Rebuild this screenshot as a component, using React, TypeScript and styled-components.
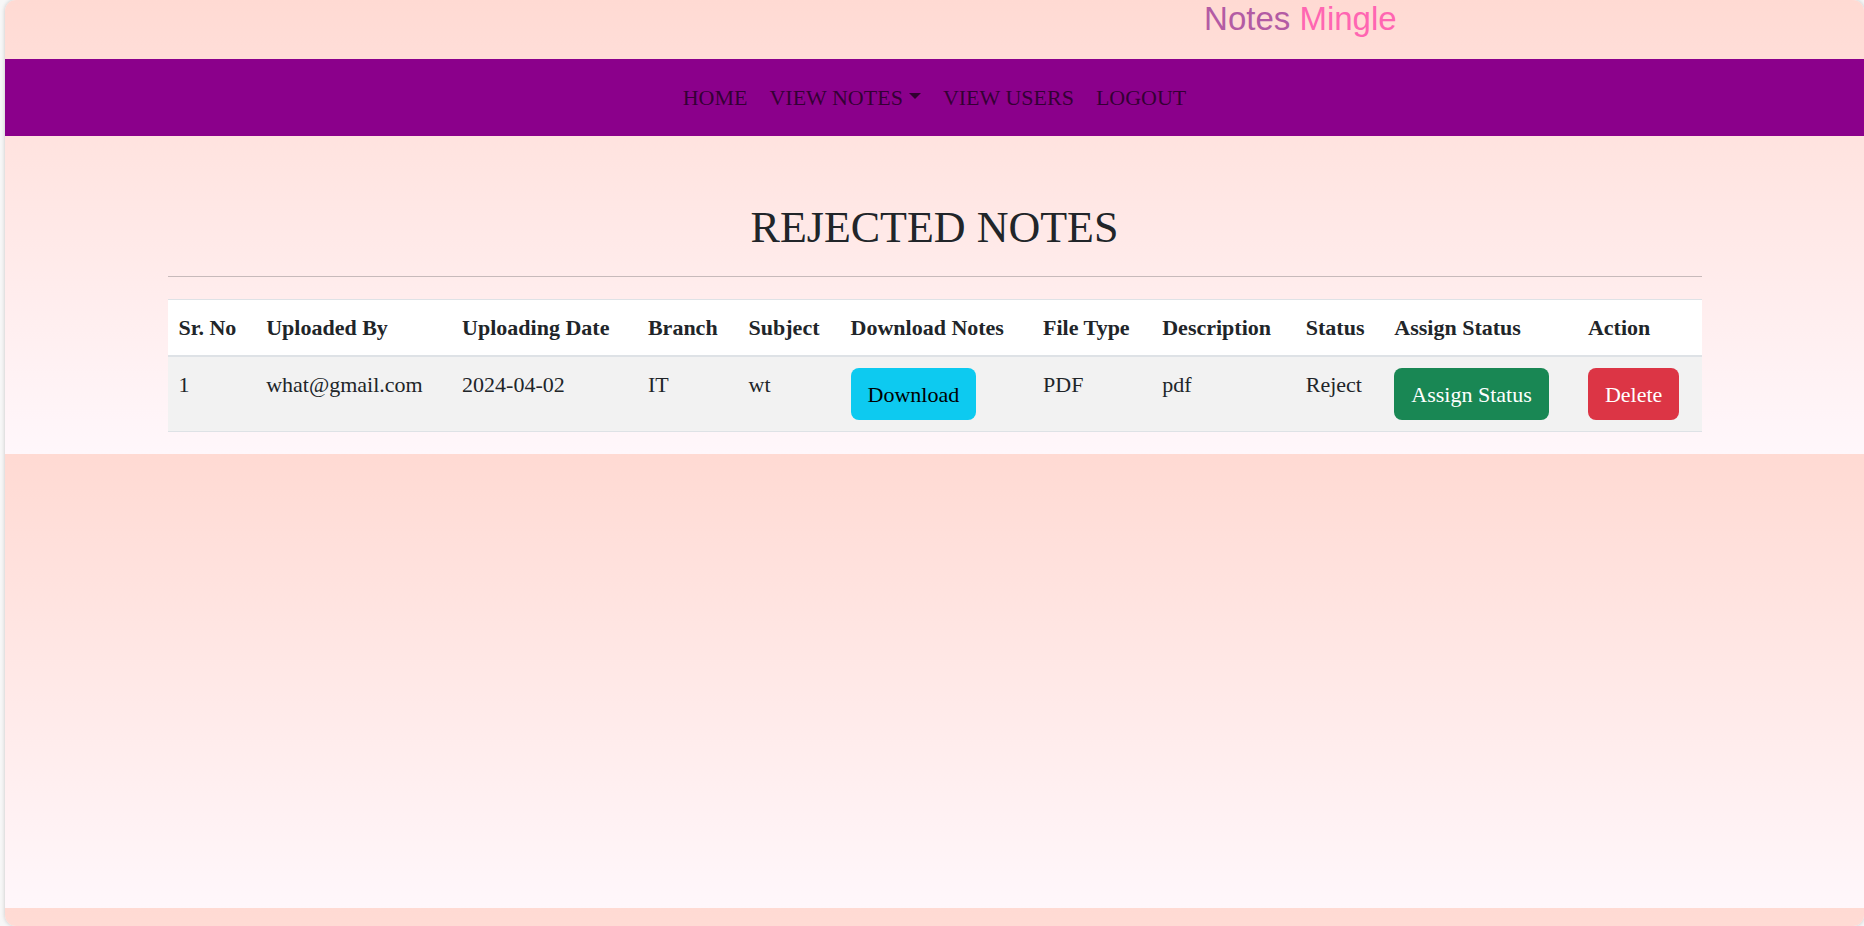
import React from "react";
import styled, { createGlobalStyle } from "styled-components";

const GlobalStyle = createGlobalStyle`
  *, *::before, *::after { box-sizing: border-box; }
  html { background: #f7f7f7; }
  body {
    margin: 0;
    font-family: "Liberation Serif", "Times New Roman", serif;
    font-size: 22px;
    line-height: 33px;
    color: #212529;
  }
`;

const Frame = styled.div`
  margin-left: 5px;
  min-height: 100vh;
  overflow: hidden;
  border-radius: 11px;
  box-shadow: 0 0 4px rgba(0, 0, 0, 0.2);
  background: linear-gradient(to bottom, #ffdad3, #fff7fb) 0 0 / 100% 454px repeat-y;
`;

const Header = styled.header`
  height: 59px;
  padding-left: 64.5%;
`;

const Brand = styled.a`
  display: block;
  font-family: "Liberation Sans", Arial, sans-serif;
  font-size: 33px;
  line-height: 37px;
  color: #b35ba4;
  text-decoration: none;
  white-space: nowrap;
`;

const BrandAccent = styled.span`
  color: #ff66b2;
`;

const Nav = styled.nav`
  padding: 11px;
  background: #8b008b;
`;

const NavList = styled.ul`
  display: flex;
  justify-content: center;
  margin: 0;
  padding: 0;
  list-style: none;
`;

const NavLink = styled.a<{ $dropdown?: boolean }>`
  display: flex;
  align-items: center;
  padding: 11px;
  color: rgba(0, 0, 0, 0.65);
  text-decoration: none;
  white-space: nowrap;

  &::after {
    content: "";
    display: ${(p) => (p.$dropdown ? "block" : "none")};
    margin: 0 0 4px 6px;
    border: 6px solid transparent;
    border-top-color: currentColor;
    border-bottom: 0;
  }
`;

const Container = styled.main`
  max-width: 1566px;
  margin: 0 auto;
  padding: 65px 16px 22px;
`;

const Title = styled.h2`
  margin: 0;
  font-size: 44px;
  font-weight: 400;
  line-height: 53px;
  text-align: center;
`;

const Divider = styled.hr`
  margin: 22px 0;
  border: 0;
  border-top: 1px solid rgba(33, 37, 41, 0.25);
`;

const Table = styled.table`
  width: 100%;
  border-collapse: collapse;
  text-align: left;
  border-top: 1px solid #dee2e6;
  border-bottom: 1px solid #dee2e6;
`;

const Head = styled.thead`
  background: #fff;
  border-bottom: 2px solid #dee2e6;
`;

const HeadCell = styled.th`
  padding: 11px;
  white-space: nowrap;
`;

const Row = styled.tr`
  background: #f2f2f2;
`;

const Cell = styled.td`
  padding: 11px;
  vertical-align: top;
  white-space: nowrap;
`;

const tones = {
  info: { background: "#0dcaf0", color: "#000" },
  success: { background: "#198754", color: "#fff" },
  danger: { background: "#dc3545", color: "#fff" },
};

const Button = styled.button<{ $tone: keyof typeof tones }>`
  display: block;
  padding: 10px 17px 9px;
  border: 0;
  border-radius: 8px;
  font: inherit;
  line-height: 33px;
  cursor: pointer;
  background: ${(p) => tones[p.$tone].background};
  color: ${(p) => tones[p.$tone].color};
`;

const links = [
  { label: "HOME" },
  { label: "VIEW NOTES", dropdown: true },
  { label: "VIEW USERS" },
  { label: "LOGOUT" },
];

const columns = [
  "Sr. No",
  "Uploaded By",
  "Uploading Date",
  "Branch",
  "Subject",
  "Download Notes",
  "File Type",
  "Description",
  "Status",
  "Assign Status",
  "Action",
];

const notes = [
  {
    uploadedBy: "what@gmail.com",
    date: "2024-04-02",
    branch: "IT",
    subject: "wt",
    fileType: "PDF",
    description: "pdf",
    status: "Reject",
  },
];

export default function App() {
  return (
    <>
      <GlobalStyle />
      <Frame>
        <Header>
          <Brand href="#">
            Notes <BrandAccent>Mingle</BrandAccent>
          </Brand>
        </Header>
        <Nav>
          <NavList>
            {links.map((link) => (
              <li key={link.label}>
                <NavLink href="#" $dropdown={link.dropdown}>
                  {link.label}
                </NavLink>
              </li>
            ))}
          </NavList>
        </Nav>
        <Container>
          <Title>REJECTED NOTES</Title>
          <Divider />
          <Table>
            <Head>
              <tr>
                {columns.map((column) => (
                  <HeadCell key={column} scope="col">
                    {column}
                  </HeadCell>
                ))}
              </tr>
            </Head>
            <tbody>
              {notes.map((note, index) => (
                <Row key={note.uploadedBy}>
                  <Cell>{index + 1}</Cell>
                  <Cell>{note.uploadedBy}</Cell>
                  <Cell>{note.date}</Cell>
                  <Cell>{note.branch}</Cell>
                  <Cell>{note.subject}</Cell>
                  <Cell>
                    <Button $tone="info">Download</Button>
                  </Cell>
                  <Cell>{note.fileType}</Cell>
                  <Cell>{note.description}</Cell>
                  <Cell>{note.status}</Cell>
                  <Cell>
                    <Button $tone="success">Assign Status</Button>
                  </Cell>
                  <Cell>
                    <Button $tone="danger">Delete</Button>
                  </Cell>
                </Row>
              ))}
            </tbody>
          </Table>
        </Container>
      </Frame>
    </>
  );
}
